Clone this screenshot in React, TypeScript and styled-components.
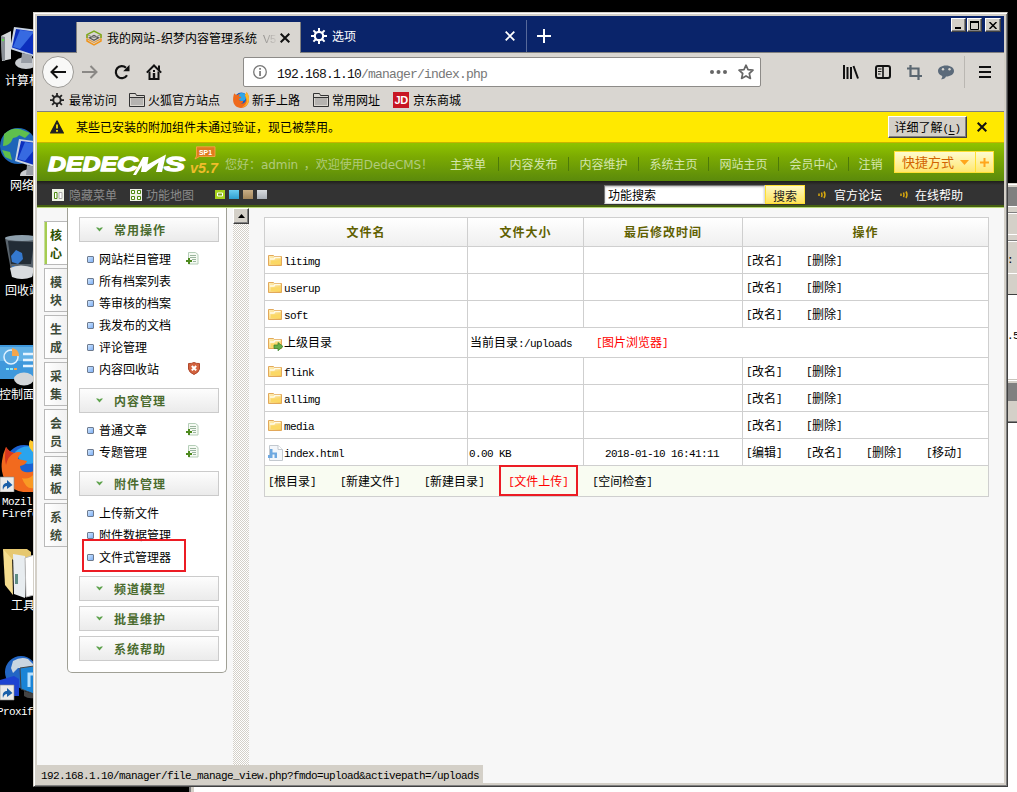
import React from "react";
import styled, { createGlobalStyle, css } from "styled-components";

const Global = createGlobalStyle`
  * { box-sizing: border-box; }
  html, body { margin: 0; padding: 0; }
  body {
    width: 1017px; height: 792px; overflow: hidden; background: #000;
    font-family: "Noto Sans CJK SC", sans-serif; font-size: 12px; line-height: 16px; color: #000;
  }
  svg { display: block; flex: none; }
`;

/* ---------- text ---------- */
const Half = styled.span<{ $big?: boolean; $raise?: boolean }>`
  font-family: "Liberation Mono", monospace;
  font-size: ${(p) => (p.$big ? 13 : 11)}px;
  letter-spacing: ${(p) => (p.$big ? -0.8 : -0.6)}px;
  line-height: 1;
  vertical-align: ${(p) => (p.$raise ? "1px" : "baseline")};
`;

/* Latin runs take half the width of a Chinese character */
function T({ s }: { s: string }) {
  const runs = s.match(/[\x20-\x7e]+|[^\x20-\x7e]+/g) ?? [];
  return (
    <>
      {runs.map((r, i) =>
        r.charCodeAt(0) < 127 ? <Half key={i} $raise={r === "[" || r === "]"}>{r}</Half> : <React.Fragment key={i}>{r}</React.Fragment>
      )}
    </>
  );
}

/* ---------- desktop ---------- */
const Desktop = styled.div`
  position: relative; width: 1017px; height: 792px; overflow: hidden; background: #000;
`;
const Shortcut = styled.div<{ $top: number }>`
  position: absolute; left: 0; top: ${(p) => p.$top}px; width: 34px; overflow: hidden;
`;
const ShortcutLabel = styled.div<{ $top: number; $left: number }>`
  position: absolute; left: ${(p) => p.$left}px; top: ${(p) => p.$top}px;
  color: #fff; white-space: pre; line-height: 12px;
`;
const BackRight = styled.div`
  position: absolute; left: 1007px; top: 183px; width: 10px; height: 609px; overflow: hidden;
  display: flex; flex-direction: column; background: #fff;
`;
const Strip = styled.div<{ $h: number; $c: string }>`
  flex: none; height: ${(p) => p.$h}px; background: ${(p) => p.$c}; line-height: ${(p) => p.$h}px; white-space: nowrap;
`;
const BackBottom = styled.div`
  position: absolute; left: 189px; top: 786px; right: 0; height: 6px; background: #fff;
  border-left: 2px solid #808080; box-shadow: inset 3px 0 #d4d0c8;
`;

/* ---------- browser window ---------- */
const Win = styled.div`
  position: absolute; left: 33px; top: 12px; width: 975px; height: 775px; padding: 3px;
  background: #d4d0c8; border: 1px solid; border-color: #d4d0c8 #404040 #404040 #d4d0c8;
  box-shadow: inset 1px 1px #fff, inset -1px -1px #808080;
  display: flex; flex-direction: column;
`;
const TabBar = styled.div`
  position: relative; height: 37px; flex: none; display: flex; align-items: flex-end; background: #0a246a;
  border-bottom: 1px solid #808080; padding-left: 39px;
`;
const Tab = styled.div<{ $w: number; $active?: boolean }>`
  display: flex; align-items: center; width: ${(p) => p.$w}px; height: ${(p) => (p.$active ? 31 : 32)}px;
  padding-left: ${(p) => (p.$active ? 9 : 10)}px; color: #fff; white-space: nowrap;
  border-right: 1px solid #57699a;
  ${(p) => p.$active && css`
    color: #000; background: #d9d6d1; border-left: 1px solid #808080; border-right-color: #808080;
    margin-bottom: -1px;
  `}
  & > span { flex: 1; margin-left: 5px; }
`;
const TabFade = styled.i`
  margin-left: 6px; font: normal 11px/12px "Liberation Sans", sans-serif; letter-spacing: -0.5px;
  background: linear-gradient(90deg, #8e8c89, #c8c5c0); -webkit-background-clip: text; color: transparent;
`;
const Caption = styled.div`
  position: absolute; right: 3px; top: 2px; display: flex; gap: 1px;
`;
const CapBtn = styled.div`
  width: 15px; height: 14px; background: #d4d0c8; border: 1px solid; border-color: #fff #404040 #404040 #fff;
  box-shadow: inset -1px -1px #808080; display: flex; align-items: center; justify-content: center;
  &:last-child { margin-left: 2px; width: 16px; }
`;
const NavBar = styled.div`
  height: 38px; flex: none; display: flex; align-items: center; background: #d9d6d1; padding: 0 11px 0 5px;
`;
const BackCircle = styled.div`
  width: 32px; height: 32px; border: 1px solid #9c9a96; border-radius: 50%; background: #f8f8f7;
  display: flex; align-items: center; justify-content: center; margin-right: 8px;
`;
const UrlBox = styled.div`
  display: flex; align-items: center; width: 518px; height: 30px; margin-left: 81px; padding: 0 6px 0 9px;
  background: #fff; border: 1px solid #8d8b88; border-radius: 2px;
`;
const Url = styled.div`
  flex: 1; margin-left: 10px; color: #777; padding-top: 2px;
  b { font-weight: 400; color: #111; }
`;
const NavTools = styled.div`
  margin-left: auto; display: flex; align-items: center; gap: 16px;
`;
const ToolRule = styled.div`
  width: 1px; height: 32px; background: #bab7b2; margin: 0 -4px 0 -6px;
`;
const BookmarkBar = styled.div`
  height: 21px; flex: none; display: flex; align-items: center; background: #d9d6d1;
  border-bottom: 1px solid #808080; padding: 0 0 2px 13px;
`;
const Bookmark = styled.div<{ $mr: number; $gap: number }>`
  display: flex; align-items: center; gap: ${(p) => p.$gap}px; margin-right: ${(p) => p.$mr}px;
  white-space: nowrap;
`;
const JD = styled.span`
  width: 16px; height: 16px; background: #c81623; color: #fff; text-align: center;
  font: 700 11px/17px "Liberation Sans", sans-serif; letter-spacing: -0.5px;
`;
const Notice = styled.div`
  height: 31px; flex: none; display: flex; align-items: center; background: #ffe900;
  border-bottom: 1px solid #c8b500; padding: 0 17px 0 13px;
  & > p { margin: 0 auto 0 12px; }
`;
const LearnBtn = styled.div`
  width: 79px; height: 22px; margin-right: 10px; text-align: center; line-height: 19px; background: #d4d0c8;
  border: 1px solid; border-color: #fff #404040 #404040 #fff; box-shadow: inset -1px -1px #808080;
  u { text-underline-offset: 2px; }
`;

/* ---------- CMS header ---------- */
const Header = styled.div`
  height: 38px; flex: none; display: flex; align-items: center; padding: 1px 10px 0 10px;
  background: linear-gradient(#8fc400, #7cab02 35%, #5b8a0b); color: #d4e6ad;
`;
const Hello = styled.div`
  width: 213px; margin-left: 3px; padding-top: 4px; color: #b1cb7c; white-space: nowrap;
  span { font-family: "DejaVu Sans", sans-serif; letter-spacing: -0.1px; }
  span:first-child { margin-right: 3px; }
`;
const MenuItem = styled.div<{ $w: number }>`
  width: ${(p) => p.$w}px; height: 14px; line-height: 14px; text-align: center; white-space: nowrap; margin-top: 3px;
  border-left: 1px solid #4d7a08;
  &:first-of-type { border-left: 0; }
`;
const Menu = styled.div` display: flex; `;
const Quick = styled.div`
  display: flex; align-items: center; height: 22px; margin: 0 0 1px auto; border: 1px solid #ffe033;
  background: linear-gradient(#fffbd0, #ffe770); color: #d26400; padding-left: 7px; width: 82px;
  font-size: 13px; gap: 6px; white-space: nowrap;
`;
const QuickPlus = styled(Quick)`
  width: 19px; padding: 0; justify-content: center; margin-left: -1px;
`;
const SubBar = styled.div`
  height: 27px; flex: none; display: flex; align-items: center; padding: 1px 0 0 15px;
  background: linear-gradient(#1f1f1a, #333 4px); border-bottom: 1px solid #b9d879; box-shadow: inset 0 -2px #456011;
  color: #808080; white-space: nowrap; position: relative;
`;
const SubLink = styled.div<{ $mr: number; $c?: string; $gap?: number }>`
  display: flex; align-items: center; gap: ${(p) => p.$gap ?? 4}px; margin-right: ${(p) => p.$mr}px; color: ${(p) => p.$c ?? "#8a8a8a"};
`;
const Swatches = styled.div` display: flex; gap: 4px; width: 389px; `;
const Swatch = styled.i<{ $a: string; $b: string }>`
  width: 10px; height: 9px; background: linear-gradient(${(p) => p.$a}, ${(p) => p.$b});
`;
const SearchInput = styled.div`
  width: 161px; height: 19px; background: #fff; border: 1px solid #777; border-right-color: #ddd; border-bottom-color: #ddd;
  padding-left: 3px; line-height: 18px; color: #000; box-shadow: inset 0 1px 2px #bbb;
`;
const SearchBtn = styled.div`
  width: 40px; height: 19px; border: 1px solid #ffe033; background: linear-gradient(#fff9c4, #ffe25c);
  text-align: center; line-height: 19px; color: #222; margin-right: 13px;
`;

/* ---------- CMS body ---------- */
const Body = styled.div`
  flex: 1; min-height: 0; display: flex; align-items: flex-start; background: #f7f7f7; position: relative;
`;
const SideTabs = styled.div`
  width: 30px; padding: 13px 0 0 7px; display: flex; flex-direction: column; gap: 3px; flex: none;
`;
const SideTab = styled.div<{ $on?: boolean }>`
  height: 44px; border: 1px solid #b9b9b9; border-right: 0; background: linear-gradient(90deg, #fff, #f1f1f1);
  padding: 4px 0 0 5px; width: 23px; font-weight: 700; line-height: 18px; color: #3c4a38; overflow: hidden;
  ${(p) => p.$on && css` padding-left: 6px; color: #2c5000; background: #fff; border-left: 0; box-shadow: inset 1px 0 #c8dba0, inset 3px 0 #a5cd50; `}
`;
const Panel = styled.div`
  width: 160px; height: 465px; flex: none; background: #fff; border: 1px solid #a0a096; border-top: 0;
  border-radius: 0 0 5px 5px; padding: 9px 7px 0 11px;
`;
const Section = styled.div<{ $open?: boolean }>` margin-bottom: ${(p) => (p.$open ? 8 : 5)}px; `;
const SectionHead = styled.div`
  height: 25px; border: 1px solid #cbcbcb; background: linear-gradient(#fdfdfd, #ebebeb);
  display: flex; align-items: center; gap: 11px; padding-left: 16px; font-weight: 700; letter-spacing: 1px; color: #4a6b2e;
`;
const Items = styled.div` padding-top: 6px; `;
const Item = styled.div`
  height: 22px; display: flex; align-items: center; padding-left: 8px;
  & > span { width: 87px; margin-left: 5px; padding-bottom: 1px; white-space: nowrap; }
  & > svg { margin-top: -2px; }
`;
const Bullet = styled.i`
  width: 7px; height: 7px; border: 1px solid #6d7b90; border-radius: 1px; background: linear-gradient(135deg, #cfe6ff, #7fb0f5);
`;
const ScrollTrack = styled.div`
  width: 16px; height: 100%; margin-left: 6px; flex: none;
  background: repeating-conic-gradient(#d4d0c8 0 25%, #fff 0 50%) 0 0 / 2px 2px;
`;
const ScrollUp = styled.div`
  width: 16px; height: 16px; background: #d4d0c8; border: 1px solid; border-color: #fff #404040 #404040 #fff;
  box-shadow: inset -1px -1px #808080; display: flex; align-items: center; justify-content: center;
`;
const Table = styled.div`
  margin: 9px 0 0 15px; width: 725px; padding: 1px; display: grid; gap: 1px; background: #cfcfcf;
  grid-template-columns: 202px 115px 158px 245px;
  grid-template-rows: 28px 26px 26px 26px 29px 26px 26px 26px 26px 30px;
`;
const Th = styled.div`
  background: linear-gradient(#fff, #efefef); color: #5f6000; font-weight: 700; letter-spacing: 1px;
  display: flex; align-items: center; justify-content: center;
`;
const Td = styled.div<{ $span?: number; $pl?: number }>`
  background: #fff; display: flex; align-items: center; grid-column: span ${(p) => p.$span ?? 1};
  padding-left: ${(p) => p.$pl ?? 3}px; padding-bottom: 1px; white-space: pre;
`;
const Op = styled.span` width: 60px; `;
const Red = styled.span<{ $ml?: number }>` color: #f00; margin-left: ${(p) => p.$ml ?? 0}px; `;
const Foot = styled(Td)` background: #f9fcf2; gap: 24px; `;
const FileIco = styled.span` width: 16px; margin-right: 0; padding-top: 3px; `;
const Status = styled.div`
  position: absolute; left: 0; bottom: 0; width: 446px; height: 18px; background: #d4d0c8; padding-left: 4px; line-height: 17px;
  white-space: nowrap;
`;
const Marker = styled.div<{ $x: number; $y: number; $w: number; $h: number }>`
  position: absolute; left: ${(p) => p.$x}px; top: ${(p) => p.$y}px; width: ${(p) => p.$w}px; height: ${(p) => p.$h}px;
  border: 2px solid #ec1c24;
`;

/* ---------- icons ---------- */
const Cross = ({ c = "#111", s = 10, w = 2 }: { c?: string; s?: number; w?: number }) => (
  <svg width={s} height={s} viewBox="0 0 10 10"><path d="M.7.7l8.6 8.6M9.3.7L.7 9.3" stroke={c} strokeWidth={w} /></svg>
);
const Gear = ({ c, s = 16 }: { c: string; s?: number }) => (
  <svg width={s} height={s} viewBox="0 0 16 16" fill="none" stroke={c}>
    <circle cx="8" cy="8" r="4.2" strokeWidth="2.2" />
    <path d="M8 0v3.5M8 12.5V16M0 8h3.5M12.5 8H16M2.4 2.4l2.4 2.4M11.2 11.2l2.4 2.4M2.4 13.6l2.4-2.4M11.2 4.8l2.4-2.4" strokeWidth="2" />
  </svg>
);
const Layers = () => (
  <svg width="16" height="16" viewBox="0 0 16 16" fill="none">
    <path d="M1 9v2l7 4 7-4V9" stroke="#f0941c" strokeWidth="1.5" />
    <path d="M1 4.800v4l7 3.700 7-3.700v-4" stroke="#e39a3c" strokeWidth="1.100" />
    <path d="M3.500 7.800l4.500-2.300 4.500 2.300-4.500 2.400z" stroke="#555" strokeWidth="1.300" />
    <path d="M1 8V4.600L8 1l7 3.600V8" stroke="#7aa81c" strokeWidth="1.500" />
    <path d="M2 5l6 2.800L14 5" stroke="#8a8a86" />
  </svg>
);
const ArrowIcon = ({ right }: { right?: boolean }) => (
  <svg width="16" height="14" viewBox="0 0 16 14" fill="none" stroke={right ? "#8a8885" : "#111"} strokeWidth="2">
    <path d={right ? "M0 7h14.500M8.500 1l6 6-6 6" : "M16 7H1.500M7.500 1l-6 6 6 6"} />
  </svg>
);
const Reload = () => (
  <svg width="16" height="16" viewBox="0 0 16 16"><path d="M13 11.200A6 6 0 1 1 12 3.800" fill="none" stroke="#111" strokeWidth="2.200" /><path d="M15.500.8v6.400H9.200z" fill="#111" /></svg>
);
const Home = () => (
  <svg width="16" height="16" viewBox="0 0 16 16"><path d="M.8 8.600L8 1.500l7.200 7.100" fill="none" stroke="#111" strokeWidth="2" /><path d="M3.500 7.500V15h9V7.500" fill="none" stroke="#111" strokeWidth="2" /><path d="M6.800 9h2.400v6H6.800zM7 6h2v2H7zM12 1.500h2V6h-2z" fill="#111" /></svg>
);
const Info = () => (
  <svg width="14" height="14" viewBox="0 0 14 14"><circle cx="7" cy="7" r="6.300" fill="none" stroke="#777" strokeWidth="1.300" /><path d="M6.200 3h1.700v1.700H6.200zM6.200 6h1.700v5H6.200z" fill="#777" /></svg>
);
const Star = () => (
  <svg width="16" height="16" viewBox="0 0 16 16"><path d="M8 1.200l2 4.500 5 .5-3.700 3.300 1.100 4.900L8 11.900l-4.400 2.500 1.100-4.900L1 6.200l5-.5z" fill="none" stroke="#666" strokeWidth="1.700" strokeLinejoin="round" /></svg>
);
const Folder = () => (
  <svg width="16" height="14" viewBox="0 0 16 14"><path d="M.5 13.500V.5h6l1 2h8v11z" fill="#d9d6d1" stroke="#333" /><path d="M2 5h12v7H2z" fill="#b5b3b0" /><path d="M1 4.500h14" stroke="#333" /></svg>
);
const Fox = ({ s }: { s: number }) => (
  <svg width={s} height={s} viewBox="0 0 16 16">
    <circle cx="8.300" cy="7.600" r="7" fill="#1559c4" /><circle cx="9" cy="5" r="4" fill="#2fa7e8" />
    <path d="M1.200 1.200C2 2.200 3 2.800 4.500 2.900c1.200-.7 2-.6 2.600-.4-.8.500-1.200 1-1.300 1.700l2.500.8c-.3 1.200-1.500 1.300-2.300 2 .3 1.800 2 2.500 4 1.900.4 1.200-.6 2.300-2.400 2.300 3 1.200 5.800-1.300 5.400-4.600-.1-1.500-.8-2.500-1.200-3.600 1-.9 1.500-1.600 1.700-3C15 2 16.500 5.200 16 8.500 15.500 13 12 16 8 16 3.500 16 .2 12.600.1 8.300 0 5.500.5 3.300 1.200 1.200z" fill="#ef6a1c" />
    <path d="M13.500 0C15.500 2.300 16.500 5.500 15.800 9c-.8 3.600-3.500 5.900-6.800 6.200 4.500-2 5.300-5.500 4.400-8.500-.4-1.600-1-2.300-1.400-3.200z" fill="#fdb827" />
  </svg>
);
/* Larger browser mark for the desktop shortcut */
const FoxLarge = () => (
  <svg width="34" height="52" viewBox="0 0 34 52">
    <circle cx="24" cy="23" r="18" fill="#1b62d2" />
    <path d="M15 12q8-8 19-5v16q-9 3-14-3z" fill="#2aa4ee" />
    <path d="M6 7q3 5 8 6 5-2 8 0-4 3-4 6l9 2q-1 4-7 5 0 5 5 6 5 1 9-1v21Q16 54 8 44 0 35 2 21q1-8 4-14z" fill="#f26a1e" />
    <path d="M30 0q-3 6 2 11l2 2V2z" fill="#ffc92e" />
    <path d="M6 7q3 5 8 6-6 3-8 12-2-8 0-18z" fill="#d6361f" />
    <path d="M22 38q7 2 12-4v14q-8 2-12-10z" fill="#f99a24" />
    <Badge y={37} />
  </svg>
);
const Warn = () => (
  <svg width="14" height="14" viewBox="0 0 14 14"><path d="M7 .8L13.400 13H.6z" fill="#222" stroke="#222" strokeWidth="1.200" strokeLinejoin="round" /><path d="M6.100 4.500h1.800v4H6.100zM6.100 10h1.800v1.700H6.100z" fill="#ffe900" /></svg>
);
const FolderSmall = ({ up }: { up?: boolean }) => (
  <svg width="16" height="14" viewBox="0 0 16 14">
    <defs><linearGradient id="fold" x1="0" y1="0" x2="1" y2="1"><stop offset="0" stopColor="#fff0bd" /><stop offset="1" stopColor="#f6c84c" /></linearGradient></defs>
    <path d="M.5 11.500V1.500h5l1 1h7v9z" fill="url(#fold)" stroke="#e2a85a" />
    <path d="M2 5h4l1-1.500h5.500" stroke="#fffbe8" fill="none" strokeWidth="1.400" /><path d="M3 6.500h9.500v3.500H3z" fill="#fbd865" />
    {up && <path d="M6 8h4V5.500l5 4-5 4.300V11.500H6z" fill="#63ad4a" stroke="#39802a" strokeWidth=".7" />}
  </svg>
);
const HtmlFile = () => (
  <svg width="16" height="16" viewBox="0 0 16 16"><path d="M1.500.5H10l4.500 4v11h-13z" fill="#f3f6fa" stroke="#c3c9cf" /><path d="M10 .5v4h4.500" fill="#fff" stroke="#c3c9cf" /><path d="M2 4h2.500v3.500H9V13H6.500V9.500h-2V13H0v-3h2z" fill="#6ea8e0" /></svg>
);
const AddDoc = () => (
  <svg width="13" height="13" viewBox="0 0 13 13"><path d="M2.500.5H9.500l2.500 2v9.500H2.500z" fill="#f5faf3" stroke="#b5ceb8" /><path d="M4 3.500h6M4 5.500h6M6 7.500h4M7 9.500h3" stroke="#9bb59e" /><path d="M0 9h6M3 6v6" stroke="#4e8a1f" strokeWidth="2" /></svg>
);
const Shield = () => (
  <svg width="14" height="13" viewBox="-2 0 14 13"><path d="M.5 1.500q3 .3 5.500-1 2.500 1.300 5.500 1V7q-.7 3.500-5.500 5.500Q1.200 10.500.5 7z" fill="#d3633f" stroke="#b0482c" /><path d="M3.800 4l4.400 4.400M8.200 4L3.800 8.400" stroke="#fff" strokeWidth="2" /></svg>
);
const Chevron = () => (
  <svg width="7" height="5" viewBox="0 0 7 5"><path d="M0 .5h2l1.500 1L5 .5h2L3.500 4.500z" fill="#5da24b" /></svg>
);
const Sound = () => (
  <svg width="9" height="8" viewBox="0 0 9 8" fill="none" stroke="#d9a90e"><path d="M1 2.500v2.500M3.500 1.500q1 2.300 0 4.600M6 .5q2 3.300 0 6.500" strokeWidth="1.500" /></svg>
);
const Logo = () => (
  <svg width="175" height="34" viewBox="0 0 175 34" fontFamily="Liberation Sans, sans-serif" fontWeight="700" fontStyle="italic">
    <g fill="#fff" stroke="#fff" strokeWidth="1.300" strokeLinejoin="round">
      <text x="1" y="25" fontSize="20" textLength="69" lengthAdjust="spacingAndGlyphs">DEDE</text>
      <text x="70" y="25" fontSize="20" textLength="21" lengthAdjust="spacingAndGlyphs">C</text>
      <text x="117" y="25" fontSize="20" textLength="21" lengthAdjust="spacingAndGlyphs">S</text>
    </g>
    <path d="M86 29l10-18h5.500l-1 7.500L119 8.500l-4 17.500h-6l2.500-9.500L99 26h-5l1-6.500-6 9.500z" fill="#fff" />
    <path d="M149.500.8H168v9.700h-15.500L148 13l1.500-3z" fill="#e07b1e" stroke="#ffa64a" strokeWidth=".8" />
    <text x="152" y="8.800" fontSize="8" fontStyle="normal" fill="#fff" textLength="13" lengthAdjust="spacingAndGlyphs">SP1</text>
    <text x="143" y="27" fontSize="14" fill="#f0bd2b" textLength="28" lengthAdjust="spacingAndGlyphs">v5.7</text>
  </svg>
);
const Badge = ({ y }: { y: number }) => (
  <g transform={`translate(0 ${y})`}><path d="M0 0h14v15H0z" fill="#ecebe9" stroke="#888" strokeWidth=".6" /><path d="M3 13c-1-5 1-7 4-7V3l5.500 5L7 12V9c-2 0-3 1-4 4z" fill="#1b5fa8" /></g>
);
const Monitor = ({ x, y }: { x: number; y: number }) => (
  <g transform={`translate(${x} ${y})`}><path d="M2 0l24 3v28L-2 22z" fill="#c9d4e4" /><path d="M4 2l22 3v24L0 20.500z" fill="#0c2fbd" /><path d="M8 3l14 2L8 22l-7-2z" fill="#4f8af5" opacity=".65" /><ellipse cx="14" cy="36" rx="11" ry="6" fill="#c9ccd0" /><path d="M10 26l10 2v8H9z" fill="#989da5" /></g>
);

const DesktopIcons = () => (
  <>
    <Shortcut $top={26}><svg width="34" height="44"><path d="M1 10l10-5v28L2 35z" fill="#d5d8da" /><path d="M1 10l4 1v24l-3-1z" fill="#8a9096" /><circle cx="3" cy="14" r="1.200" fill="#5ee04a" /><Monitor x={12} y={1} /></svg></Shortcut>
    <ShortcutLabel $left={5} $top={74}>计算机</ShortcutLabel>
    <Shortcut $top={126}><svg width="34" height="50"><circle cx="18" cy="20" r="18" fill="#1d65b8" /><path d="M4 8q9-8 18-4-2 7-9 8-3 8-10 8zM20 3l10 4-5 5-6-3z" fill="#5fbf4c" /><path d="M2 24l8 2 2 8-7-3z" fill="#5fbf4c" /><Monitor x={17} y={13} /></svg></Shortcut>
    <ShortcutLabel $left={10} $top={179}>网络</ShortcutLabel>
    <Shortcut $top={234}><svg width="34" height="48"><path d="M5 4l32-2-4 40q-14 5-21 0z" fill="#59636c" /><path d="M8 7l26 1-3 22H11z" fill="#222c36" /><ellipse cx="22" cy="4" rx="17" ry="3" fill="#8ea0ad" /><path d="M11 22l5-6 6 3 1 6-5 5-6-2zM12 32h9v5h-8z" fill="#3478ce" /><path d="M10 34q10-5 24 0l-2 9q-10 4-20 0z" fill="#d9dcdf" /></svg></Shortcut>
    <ShortcutLabel $left={5} $top={284}>回收站</ShortcutLabel>
    <Shortcut $top={344}><svg width="34" height="42"><path d="M0 1h34v34H0z" fill="#3f98dc" /><path d="M0 3h34v14H0z" fill="#62b1e6" /><circle cx="11" cy="13" r="7" fill="#5ba9e0" stroke="#dff1ff" strokeWidth="1.500" /><path d="M12 12V4q7 1 7 8z" fill="#f5a64c" /><path d="M23 10h11M23 16h11M23 22h11" stroke="#e6f4ff" strokeWidth="2.500" /><path d="M6 25h3m1 0h3" stroke="#8ef" strokeWidth="2" /><path d="M14 25h3" stroke="#f5a64c" strokeWidth="2" /><ellipse cx="24" cy="35" rx="10" ry="6.500" fill="#d3d6d9" /></svg></Shortcut>
    <ShortcutLabel $left={-1} $top={388}>控制面板</ShortcutLabel>
    <Shortcut $top={440}><FoxLarge /></Shortcut>
    <ShortcutLabel $left={2} $top={494}><T s="Mozilla" /></ShortcutLabel>
    <ShortcutLabel $left={2} $top={506}><T s="Firefox" /></ShortcutLabel>
    <Shortcut $top={546}><svg width="34" height="52"><path d="M3 3l9 2 1 44-8-10z" fill="#f4dc8e" /><path d="M3 3h24l4 3v8H13z" fill="#e6c870" /><path d="M13 8l12 2v42l-11-4z" fill="#e8edf0" /><path d="M15 28h3v10h-3z" fill="#5e8d84" /><path d="M25 12l9-3v40l-8 2z" fill="#fff" stroke="#bbb" /></svg></Shortcut>
    <ShortcutLabel $left={11} $top={599}>工具</ShortcutLabel>
    <Shortcut $top={654}><svg width="34" height="48"><circle cx="21" cy="18" r="16" fill="#2366c4" /><path d="M13 7q8-5 15-2l6 6v3H18l-5 5-2-5z" fill="#c9d5e0" /><path d="M0 26l14-4 5 3v17H0z" fill="#1d43d1" /><path d="M20 14l14-2v28l-13-5z" fill="#1b84d6" stroke="#444" /><path d="M29 33V20h8" stroke="#b9e2ff" strokeWidth="3" fill="none" /><path d="M24 37l10 3v4q-6 1-10-2z" fill="#444" /><Badge y={31} /></svg></Shortcut>
    <ShortcutLabel $left={-3} $top={704}><T s="Proxifier" /></ShortcutLabel>
  </>
);

/* ---------- data ---------- */
type Row = { name: string; ops?: string[]; size?: string; time?: string; kind?: "up" | "html" };
const basic = ["[改名]", "[删除]"];
const rows: Row[] = [
  { name: "litimg", ops: basic }, { name: "userup", ops: basic }, { name: "soft", ops: basic },
  { name: "上级目录", kind: "up" },
  { name: "flink", ops: basic }, { name: "allimg", ops: basic }, { name: "media", ops: basic },
  { name: "index.html", kind: "html", size: "0.00 KB", time: "2018-01-10 16:41:11", ops: ["[编辑]", "[改名]", "[删除]", "[移动]"] },
];
const sections: { title: string; items: [string, React.ReactNode?][] }[] = [
  { title: "常用操作", items: [["网站栏目管理", <AddDoc />], ["所有档案列表"], ["等审核的档案"], ["我发布的文档"], ["评论管理"], ["内容回收站", <Shield />]] },
  { title: "内容管理", items: [["普通文章", <AddDoc />], ["专题管理", <AddDoc />]] },
  { title: "附件管理", items: [["上传新文件"], ["附件数据管理"], ["文件式管理器"]] },
  { title: "频道模型", items: [] }, { title: "批量维护", items: [] }, { title: "系统帮助", items: [] },
];

export default function App() {
  return (
    <Desktop>
      <Global />
      <DesktopIcons />
      <BackRight>
        <Strip $h={1} $c="#d4d0c8" /><Strip $h={1} $c="#fff" /><Strip $h={2} $c="#d4d0c8" /><Strip $h={19} $c="#808080" />
        <Strip $h={1} $c="#fff" /><Strip $h={5} $c="#d4d0c8" /><Strip $h={1} $c="#808080" /><Strip $h={1} $c="#fff" /><Strip $h={20} $c="#d4d0c8" />
        <Strip $h={1} $c="#fff" /><Strip $h={5} $c="#d4d0c8" /><Strip $h={1} $c="#808080" /><Strip $h={1} $c="#fff" />
        <Strip $h={31} $c="#d4d0c8"><T s=":" /></Strip><Strip $h={1} $c="#fff" /><Strip $h={20} $c="#d4d0c8" /><Strip $h={1} $c="#404040" />
        <Strip $h={77} $c="#fff"><T s=".5" /></Strip><Strip $h={7} $c="#fff" /><Strip $h={1} $c="#c8c4bc" /><Strip $h={1} $c="#fff" /><Strip $h={2} $c="#d4d0c8" />
        <Strip $h={18} $c="#808080" /><Strip $h={20} $c="#d4d0c8" /><Strip $h={1} $c="#808080" /><Strip $h={1} $c="#404040" />
      </BackRight>
      <BackBottom />
      <Win>
        <TabBar>
          <Tab $w={225} $active>
            <Layers />
            <span><T s="我的网站-织梦内容管理系统" /><TabFade>V5</TabFade></span>
            <Cross s={10} />
            <i style={{ width: 10 }} />
          </Tab>
          <Tab $w={226}>
            <Gear c="#fff" />
            <span>选项</span>
            <Cross c="#fff" s={10} w={1.800} />
            <i style={{ width: 11 }} />
          </Tab>
          <Tab $w={40} style={{ border: 0 }}>
            <svg width="14" height="14"><path d="M7 0v14M0 7h14" stroke="#fff" strokeWidth="2" /></svg>
          </Tab>
          <Caption>
            <CapBtn><svg width="9" height="8"><path d="M1 7h6" stroke="#000" strokeWidth="2" /></svg></CapBtn>
            <CapBtn><svg width="9" height="9"><path d="M.5 1.500v7h8v-7M0 1h9" stroke="#000" fill="none" /><path d="M0 1h9" stroke="#000" strokeWidth="2" /></svg></CapBtn>
            <CapBtn><svg width="8" height="7"><path d="M.5 0l7 7M7.500 0l-7 7" stroke="#000" strokeWidth="1.500" /></svg></CapBtn>
          </Caption>
        </TabBar>
        <NavBar>
          <BackCircle><ArrowIcon /></BackCircle>
          <ArrowIcon right />
          <i style={{ width: 16 }} />
          <Reload />
          <i style={{ width: 16 }} />
          <Home />
          <UrlBox>
            <Info />
            <Url><Half $big><b>192.168.1.10</b>/manager/index.php</Half></Url>
            <svg width="17" height="4"><g fill="#666"><circle cx="2" cy="2" r="2" /><circle cx="8.500" cy="2" r="2" /><circle cx="15" cy="2" r="2" /></g></svg>
            <i style={{ width: 11 }} />
            <Star />
          </UrlBox>
          <NavTools>
            <svg width="16" height="14" viewBox="0 0 16 14" stroke="#111" strokeWidth="2"><path d="M1 0v14M4.500 2v12M8 2v12M10.500 1l4.500 12.500" /></svg>
            <svg width="16" height="14" viewBox="0 0 16 14"><rect x="1" y="1" width="14" height="12" rx="2" fill="none" stroke="#111" strokeWidth="2" /><path d="M8 1v12" stroke="#111" strokeWidth="1.600" /><path d="M3 4h3.500M3 6.500h3.500M3 9h2.500" stroke="#111" /></svg>
            <svg width="15" height="15" viewBox="0 0 15 15" fill="none" stroke="#5b6771" strokeWidth="2.200"><path d="M3.500 0v11H15M0 3.500h11.500V15" /></svg>
            <svg width="16" height="15" viewBox="0 0 16 15"><path d="M8 .5c4.500 0 8 2.300 8 5.500s-3.500 5.500-8 5.500c-.5 1.500-2.500 3-5 2.700 1-1 1.400-2 1.200-3.300C1.500 10 0 8.200 0 6 0 2.800 3.500.5 8 .5z" fill="#5b6a7a" /><circle cx="5" cy="4.200" r="1.200" fill="#d9d6d1" /><circle cx="11.500" cy="4.200" r="1.200" fill="#d9d6d1" /></svg>
            <ToolRule />
            <svg width="16" height="12" viewBox="0 0 16 12"><path d="M2 1h12M2 6h12M2 11h12" stroke="#111" strokeWidth="2" /></svg>
          </NavTools>
        </NavBar>
        <BookmarkBar>
          <Bookmark $gap={5} $mr={12}><Gear c="#222" s={14} />最常访问</Bookmark>
          <Bookmark $gap={3} $mr={13}><Folder />火狐官方站点</Bookmark>
          <Bookmark $gap={3} $mr={13}><Fox s={16} />新手上路</Bookmark>
          <Bookmark $gap={3} $mr={13}><Folder />常用网址</Bookmark>
          <Bookmark $gap={4} $mr={0}><JD>JD</JD>京东商城</Bookmark>
        </BookmarkBar>
        <Notice>
          <Warn />
          <p>某些已安装的附加组件未通过验证，现已被禁用。</p>
          <LearnBtn>详细了解<Half>(<u>L</u>)</Half></LearnBtn>
          <Cross s={10} />
        </Notice>
        <Header>
          <Logo />
          <Hello>您好：<span>admin</span> ，欢迎使用<span>DedeCMS</span>！</Hello>
          <Menu>
            <MenuItem $w={60}>主菜单</MenuItem>
            {["内容发布", "内容维护", "系统主页", "网站主页", "会员中心"].map((m) => <MenuItem $w={70} key={m}>{m}</MenuItem>)}
            <MenuItem $w={44}>注销</MenuItem>
          </Menu>
          <Quick>快捷方式<svg width="9" height="5"><path d="M0 0h9L4.500 5z" fill="#ffa61c" /></svg></Quick>
          <QuickPlus><svg width="9" height="9"><path d="M4.500 0v9M0 4.500h9" stroke="#ffa61c" strokeWidth="2" /></svg></QuickPlus>
        </Header>
        <SubBar>
          <SubLink $mr={13} $gap={5}><svg width="12" height="12"><path d="M0 0h12v12H0z" fill="#eef2e6" /><path d="M2.500 3.500h2.500v6H2.500z" fill="#fff" stroke="#4f8a12" /><path d="M7 3.500h3v6H7z" fill="#fff" stroke="#aaa" /></svg>隐藏菜单</SubLink>
          <SubLink $mr={21}><svg width="12" height="12"><path d="M0 0h12v12H0z" fill="#eef2e6" /><path d="M1.500 1.500h3v3h-3zM7.500 1.500h3v3h-3zM1.500 7.500h3v3h-3zM7.500 7.500h3v3h-3z" fill="#fff" stroke="#4f8a12" /></svg>功能地图</SubLink>
          <Swatches>
            <svg width="10" height="9"><path d="M0 0h10v9H0z" fill="#a6d11c" /><path d="M2.500 3h5v3h-5z" fill="#7ea515" stroke="#fff" /></svg>
            <Swatch $a="#6bcdf0" $b="#2e9fd0" /><Swatch $a="#c9ae86" $b="#a38559" /><Swatch $a="#d9dce0" $b="#aab0b7" />
          </Swatches>
          <SearchInput>功能搜索</SearchInput>
          <SearchBtn>搜索</SearchBtn>
          <SubLink $mr={18} $c="#fff" $gap={7}><Sound />官方论坛</SubLink>
          <SubLink $mr={0} $c="#fff" $gap={6}><Sound />在线帮助</SubLink>
        </SubBar>
        <Body>
          <SideTabs>
            {["核心", "模块", "生成", "采集", "会员", "模板", "系统"].map((t, i) => (
              <SideTab key={t} $on={i === 0}>{t[0]}<br />{t[1]}</SideTab>
            ))}
          </SideTabs>
          <Panel>
            {sections.map((s) => (
              <Section key={s.title} $open={s.items.length > 0}>
                <SectionHead><Chevron />{s.title}</SectionHead>
                {s.items.length > 0 && (
                  <Items>{s.items.map(([t, ic]) => <Item key={t}><Bullet /><span>{t}</span>{ic}</Item>)}</Items>
                )}
              </Section>
            ))}
          </Panel>
          <ScrollTrack><ScrollUp><svg width="7" height="4"><path d="M3.500 0L7 4H0z" /></svg></ScrollUp></ScrollTrack>
          <Table>
            {["文件名", "文件大小", "最后修改时间", "操作"].map((h) => <Th key={h}>{h}</Th>)}
            {rows.map((r) => (
              <React.Fragment key={r.name}>
                <Td>
                  <FileIco>{r.kind === "html" ? <HtmlFile /> : <FolderSmall up={r.kind === "up"} />}</FileIco>
                  <span><T s={r.name} /></span>
                </Td>
                {r.kind === "up" ? (
                  <Td $span={3} $pl={2}><span><T s="当前目录:/uploads" /></span><Red $ml={24}><T s="[图片浏览器]" /></Red></Td>
                ) : (
                  <>
                    <Td $pl={1}>{r.size && <span><T s={r.size} /></span>}</Td>
                    <Td $pl={21}>{r.time && <span><T s={r.time} /></span>}</Td>
                    <Td>{r.ops!.map((o) => <Op key={o}><T s={o} /></Op>)}</Td>
                  </>
                )}
              </React.Fragment>
            ))}
            <Foot $span={4} $pl={3}>
              <span><T s="[根目录]" /></span><span><T s="[新建文件]" /></span><span><T s="[新建目录]" /></span>
              <Red><T s="[文件上传]" /></Red><span><T s="[空间检查]" /></span>
            </Foot>
          </Table>
          <Status><T s="192.168.1.10/manager/file_manage_view.php?fmdo=upload&activepath=/uploads" /></Status>
        </Body>
      </Win>
      <Marker $x={82} $y={539} $w={104} $h={33} />
      <Marker $x={499} $y={465} $w={79} $h={31} />
    </Desktop>
  );
}
